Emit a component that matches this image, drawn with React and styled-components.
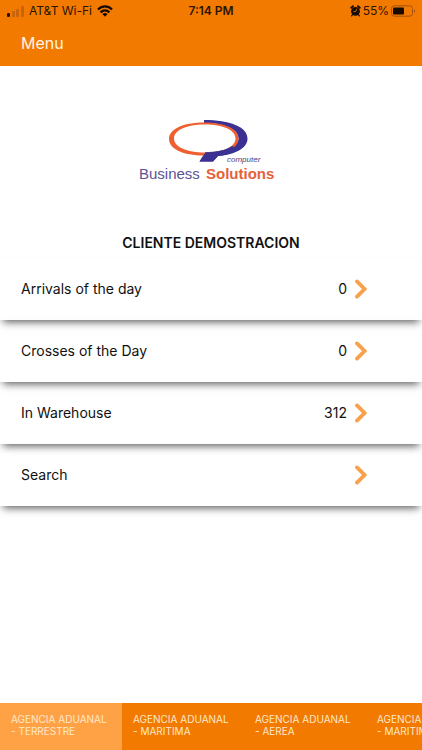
import React, { useState } from "react";
import styled, { createGlobalStyle } from "styled-components";

const GlobalStyle = createGlobalStyle`
  :root {
    --clr-primary: #f27a00;
    --clr-primary-light: #ffa246;
    --clr-text: #111111;
  }

  * {
    box-sizing: border-box;
  }

  body {
    margin: 0;
    background: #ffffff;
    color: var(--clr-text);
    font-family: Inter, "Liberation Sans", sans-serif;
  }

  button {
    border: 0;
    font-family: inherit;
    cursor: pointer;
  }
`;

const Page = styled.div`
  display: flex;
  flex-direction: column;
  height: 100vh;
`;

const Header = styled.header`
  flex: none;
  background: var(--clr-primary);
  padding-bottom: 12px;
`;

const StatusBar = styled.div`
  display: grid;
  grid-template-columns: 1fr auto 1fr;
  align-items: center;
  height: 22px;
  padding: 0 6px;
  font-size: 12px;
  line-height: 22px;
  color: #2b1500;
`;

const StatusGroup = styled.div`
  display: flex;
  align-items: center;
  justify-content: ${({ $end }) => ($end ? "flex-end" : "flex-start")};
  gap: ${({ $end }) => ($end ? "2px" : "5px")};
`;

const Clock = styled.time`
  font-weight: 600;
`;

const Title = styled.h1`
  margin: 10px 21px 0;
  font-size: 16px;
  font-weight: 400;
  line-height: 22px;
  color: #fff3e0;
`;

const Content = styled.main`
  flex: 1;
  min-height: 0;
  overflow-y: auto;
  padding-top: 50px;
`;

const Logo = styled.svg`
  display: block;
  margin: 0 auto;
`;

const ClientName = styled.h2`
  margin: 49px 0 5px;
  font-size: 14px;
  font-weight: 600;
  line-height: 20px;
  text-align: center;
`;

const List = styled.nav`
  display: flex;
  flex-direction: column;
`;

const Row = styled.a`
  display: grid;
  grid-template-columns: 1fr auto 12px;
  align-items: center;
  column-gap: 8px;
  height: 62px;
  padding: 0 55px 0 21px;
  font-size: 14px;
  line-height: 20px;
  color: inherit;
  text-decoration: none;
  box-shadow: 0 5px 8px -3px rgba(0, 0, 0, 0.65);
`;

const Tabs = styled.div`
  flex: none;
  display: flex;
  overflow-x: auto;
  scrollbar-width: none;
  background: var(--clr-primary);
`;

const Tab = styled.button`
  flex: none;
  width: 122px;
  height: 47px;
  padding: 0 0 3px 11px;
  background: ${({ $active }) =>
    $active ? "var(--clr-primary-light)" : "transparent"};
  color: #ffe8c8;
  font-size: 10px;
  line-height: 12px;
  text-align: left;
`;

const TabLine = styled.span`
  display: block;
`;

const rows = [
  { label: "Arrivals of the day", value: 0 },
  { label: "Crosses of the Day", value: 0 },
  { label: "In Warehouse", value: 312 },
  { label: "Search", value: null },
];

const agencies = ["TERRESTRE", "MARITIMA", "AEREA", "MARITIMA"];

function SignalIcon() {
  return (
    <svg width="18" height="12" viewBox="0 0 18 12" aria-hidden="true">
      <rect x="1" y="8" width="3" height="4" rx="1" fill="#2b1500" />
      <g fill="#c96508">
        <rect x="6" y="6" width="3" height="6" rx="1" />
        <rect x="10" y="4" width="3" height="8" rx="1" />
        <rect x="15" y="1" width="3" height="11" rx="1" />
      </g>
    </svg>
  );
}

function WifiIcon() {
  return (
    <svg width="16" height="12" viewBox="0 0 16 12" aria-hidden="true">
      <g fill="none" stroke="#170b00" strokeWidth="2.2">
        <path d="M1 4.6C5 .4 11 .4 15 4.6" />
        <path d="M3.6 7.4C6.2 4.8 9.8 4.8 12.4 7.4" />
      </g>
      <path d="M5.4 9.1Q8 6.9 10.6 9.1L8 11.8Z" fill="#170b00" />
    </svg>
  );
}

function AlarmIcon() {
  return (
    <svg width="11" height="12" viewBox="0 0 11 12" aria-hidden="true">
      <g stroke="#170b00" strokeLinecap="round">
        <path d="M1.2 2.7 3 1.2M8 1.2l1.8 1.5" strokeWidth="1.8" />
        <path d="M2.6 9.7 1.6 10.8M8.4 9.7l1 1.1" strokeWidth="1.2" />
      </g>
      <circle cx="5.5" cy="6.3" r="4.4" fill="#170b00" />
      <path
        d="M6.7 3.8 5.6 6.6H3.3"
        fill="none"
        stroke="#f27a00"
        strokeWidth=".8"
      />
    </svg>
  );
}

function BatteryIcon() {
  return (
    <svg width="25" height="12" viewBox="0 0 25 12" aria-hidden="true">
      <rect
        x=".5"
        y=".8"
        width="21"
        height="10.4"
        rx="2.8"
        fill="none"
        stroke="#a65208"
      />
      <rect x="2" y="2.5" width="11" height="7" rx="1.2" fill="#170b00" />
      <path d="M23 4.2Q25.2 6 23 7.8Z" fill="#a65208" />
    </svg>
  );
}

function ChevronIcon() {
  return (
    <svg width="12" height="20" viewBox="0 0 12 20" aria-hidden="true">
      <path
        d="M2 2.4 9.6 10 2 17.6"
        fill="none"
        stroke="#f9a04b"
        strokeWidth="3.8"
        strokeLinecap="round"
      />
    </svg>
  );
}

function CompanyLogo() {
  return (
    <Logo
      width="144"
      height="68"
      viewBox="0 0 144 68"
      role="img"
      aria-label="Business Solutions computer"
    >
      {/* blue crescent */}
      <path
        d="M65 4C91 4 108.5 11 108.5 22.5C108.5 32 97 38.5 79 40L74 45.5H60.5L66.5 36C86 36 99.5 31 99.5 22.5C99.5 13 85 7 65 7Z"
        fill="#3a3192"
      />
      {/* orange ring, thick on the left and thin on the right */}
      <path
        fillRule="evenodd"
        d="M65 6.5C44 6.5 30 13 30 23C30 33 44 39.5 65 39.5C86 39.5 99.5 32 99.5 22.5C99.5 13 86 6.5 65 6.5ZM66 8.5C84 8.5 96.5 14 96.5 22.5C96.5 31 84 36.5 66 36.5C48 36.5 35 31 35 22.5C35 14 48 8.5 66 8.5Z"
        fill="#ee6030"
      />
      {/* tail, laid over the bottom of the ring */}
      <path
        d="M66.5 36.5C78 36.3 88 33.8 93 30L98 32C93 37 86 39.4 79 40L74 45.5H60.5Z"
        fill="#3a3192"
      />
      <g fontFamily="Liberation Sans, sans-serif">
        <text x="88" y="46" fontSize="8" fontStyle="italic" fill="#494184">
          computer
        </text>
        <text x="0" y="63" fontSize="15" fill="#5b5494">
          Business
        </text>
        <text x="67" y="63" fontSize="15" fontWeight="700" fill="#e4623a">
          Solutions
        </text>
      </g>
    </Logo>
  );
}

export default function App() {
  const [active, setActive] = useState(0);

  return (
    <Page>
      <GlobalStyle />
      <Header>
        <StatusBar>
          <StatusGroup>
            <SignalIcon />
            <span>AT&amp;T Wi-Fi</span>
            <WifiIcon />
          </StatusGroup>
          <Clock>7:14 PM</Clock>
          <StatusGroup $end>
            <AlarmIcon />
            <span>55%</span>
            <BatteryIcon />
          </StatusGroup>
        </StatusBar>
        <Title>Menu</Title>
      </Header>
      <Content>
        <CompanyLogo />
        <ClientName>CLIENTE DEMOSTRACION</ClientName>
        <List>
          {rows.map(({ label, value }) => (
            <Row key={label} href="#">
              <span>{label}</span>
              <span>{value}</span>
              <ChevronIcon />
            </Row>
          ))}
        </List>
      </Content>
      <Tabs role="tablist">
        {agencies.map((name, index) => (
          <Tab
            key={index}
            role="tab"
            aria-selected={index === active}
            $active={index === active}
            onClick={() => setActive(index)}
          >
            <TabLine>AGENCIA ADUANAL</TabLine>
            <TabLine>- {name}</TabLine>
          </Tab>
        ))}
      </Tabs>
    </Page>
  );
}
